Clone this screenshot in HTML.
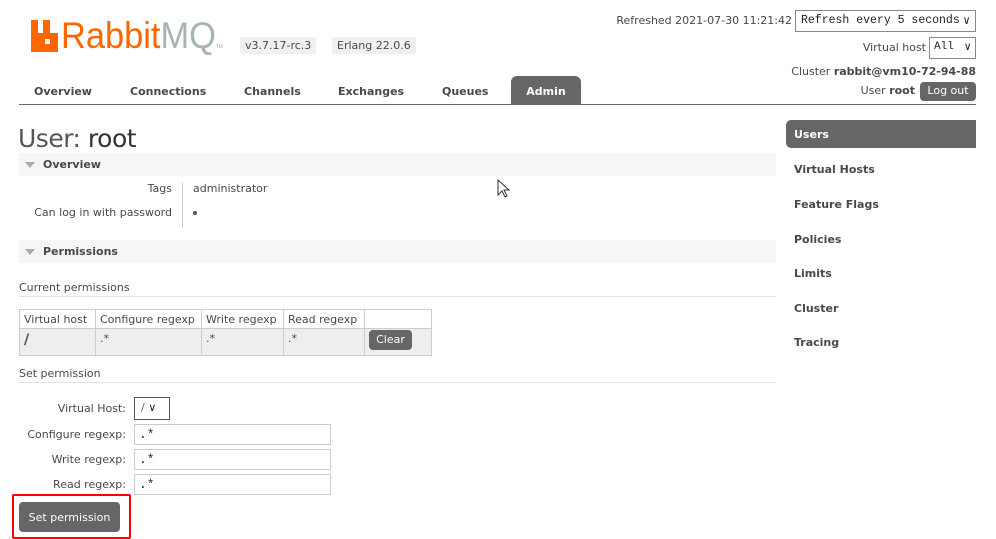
<!DOCTYPE html>
<html><head><meta charset="utf-8"><style>
*{box-sizing:border-box;margin:0;padding:0}
body{width:996px;height:539px;background:#fff;font-family:"DejaVu Sans","Liberation Sans",sans-serif;font-size:11px;color:#484848;position:relative;overflow:hidden}
.a{position:absolute;white-space:nowrap}
.r{position:absolute;white-space:nowrap;right:20px}
.badge{background:#f0f0f0;border-radius:3px;padding:2px 5px;font-size:11px;color:#484848}
.nav{font-weight:bold;top:85px;color:#484848}
.side{left:794px;font-weight:bold;color:#484848}
.bar{left:19px;width:757px;height:23px;background:#f6f6f6}
.bar span{position:absolute;left:24px;top:5px;font-weight:bold}
.tri{position:absolute;left:6px;top:9px;width:0;height:0;border-left:5px solid transparent;border-right:5px solid transparent;border-top:6px solid #aaa}
.btn{background:#666;color:#fff;border-radius:4px;text-align:center}
.inp{left:134px;width:197px;height:21px;border:1px solid #ccc;font-family:"Liberation Mono",monospace;font-size:13px;padding:2px 4px;color:#222}
.lbl{text-align:right;width:107px;left:19px}
table{border-collapse:collapse;position:absolute;left:19px;top:309px}
td{border:1px solid #ccc;padding:3px 4px 2px;font-size:11px;height:18px;vertical-align:top;white-space:nowrap}
</style></head><body>
<div class="a" style="left:31px;top:20px;width:27px;height:32px">
<svg width="27" height="32" viewBox="0 0 27 32"><path d="M0 0h7v13h5V0h7v13h8v19H0z" fill="#f60"/><rect x="14" y="19" width="5" height="5" fill="#fff"/></svg></div>
<div class="a" style="left:61px;top:15px;font-family:'Liberation Sans',sans-serif;font-size:37px;transform:scaleX(0.93);transform-origin:left;color:#f60">Rabbit<span style="color:#a6b5b0">MQ</span><span style="font-size:5px;color:#aaa">TM</span></div>
<div class="a badge" style="left:240px;top:37px">v3.7.17-rc.3</div>
<div class="a badge" style="left:332px;top:37px">Erlang 22.0.6</div>

<div class="r" style="right:204px;top:14px">Refreshed 2021-07-30 11:21:42</div>
<div class="a" style="left:795px;top:10px;width:181px;height:22px;border:1px solid #888;font-family:'Liberation Mono',monospace;font-size:11.5px;padding:3px 5px;color:#222">Refresh every 5 seconds<span style="position:absolute;right:5px;top:2px">&#x2228;</span></div>
<div class="r" style="right:70px;top:41px">Virtual host</div>
<div class="a" style="left:929px;top:37px;width:47px;height:22px;border:1px solid #888;font-family:'Liberation Mono',monospace;padding:3px 4px;color:#222">All<span style="position:absolute;right:4px;top:2px">&#x2228;</span></div>
<div class="r" style="top:65px">Cluster <b>rabbit@vm10-72-94-88</b></div>
<div class="r" style="right:81px;top:84px">User <b>root</b></div>
<div class="a btn" style="left:920px;top:82px;width:56px;height:19px;padding-top:2px">Log out</div>

<div class="a nav" style="left:34px">Overview</div>
<div class="a nav" style="left:130px">Connections</div>
<div class="a nav" style="left:244px">Channels</div>
<div class="a nav" style="left:338px">Exchanges</div>
<div class="a nav" style="left:442px">Queues</div>
<div class="a" style="left:511px;top:76px;width:70px;height:29px;background:#666;border-radius:6px 6px 0 0;color:#fff;font-weight:bold;text-align:center;padding-top:9px">Admin</div>
<div class="a" style="left:19px;top:104px;width:957px;height:1px;background:#666"></div>

<div class="a" style="left:786px;top:120px;width:190px;height:28px;background:#666;border-radius:5px 0 0 5px;color:#fff;font-weight:bold;padding:8px 8px">Users</div>
<div class="a side" style="top:163px">Virtual Hosts</div>
<div class="a side" style="top:198px">Feature Flags</div>
<div class="a side" style="top:233px">Policies</div>
<div class="a side" style="top:267px">Limits</div>
<div class="a side" style="top:302px">Cluster</div>
<div class="a side" style="top:336px">Tracing</div>

<div class="a" style="left:18px;top:124px;font-size:25px;color:#333;letter-spacing:-0.5px"><span style="color:#555">User:</span> root</div>
<div class="a bar" style="top:153px"><div class="tri"></div><span>Overview</span></div>
<div class="r" style="right:824px;top:182px">Tags</div>
<div class="r" style="right:824px;top:206px">Can log in with password</div>
<div class="a" style="left:182px;top:182px;width:1px;height:46px;background:#ccc"></div>
<div class="a" style="left:193px;top:182px">administrator</div>
<div class="a" style="left:193px;top:211px;width:4px;height:4px;border-radius:2px;background:#555"></div>
<div class="a bar" style="top:240px"><div class="tri"></div><span>Permissions</span></div>

<div class="a" style="left:19px;top:281px">Current permissions</div>
<div class="a" style="left:19px;top:296px;width:757px;height:1px;background:#e4e4e4"></div>
<table>
<tr><td style="width:76px">Virtual host</td><td style="width:106px">Configure regexp</td><td style="width:82px">Write regexp</td><td style="width:81px">Read regexp</td><td style="width:67px"></td></tr>
<tr style="background:#eee"><td style="height:27px;font-weight:bold;font-size:14px">/</td><td>.*</td><td>.*</td><td>.*</td><td></td></tr>
</table>
<div class="a btn" style="left:369px;top:330px;width:43px;height:20px;padding-top:3px">Clear</div>

<div class="a" style="left:19px;top:367px">Set permission</div>
<div class="a" style="left:19px;top:382px;width:757px;height:1px;background:#e4e4e4"></div>
<div class="a lbl" style="top:402px">Virtual Host:</div>
<div class="a" style="left:134px;top:397px;width:36px;height:23px;border:1px solid #555;padding:3px 6px;color:#666">/ <span style="color:#222">&#x2228;</span></div>
<div class="a lbl" style="top:428px">Configure regexp:</div>
<div class="a lbl" style="top:453px">Write regexp:</div>
<div class="a lbl" style="top:478px">Read regexp:</div>
<div class="a inp" style="top:424px">.*</div>
<div class="a inp" style="top:449px">.*</div>
<div class="a inp" style="top:474px">.*</div>
<div class="a btn" style="left:19px;top:502px;width:101px;height:30px;padding-top:9px">Set permission</div>
<div class="a" style="left:12px;top:494px;width:119px;height:45px;border:2px solid #f00;border-radius:2px"></div>

<svg class="a" style="left:497px;top:179px" width="14" height="20" viewBox="0 0 14 20"><path d="M1 1v15l4-4 3 6 2-1-3-6h5z" fill="#fff" stroke="#333" stroke-width="1"/></svg>
</body></html>
